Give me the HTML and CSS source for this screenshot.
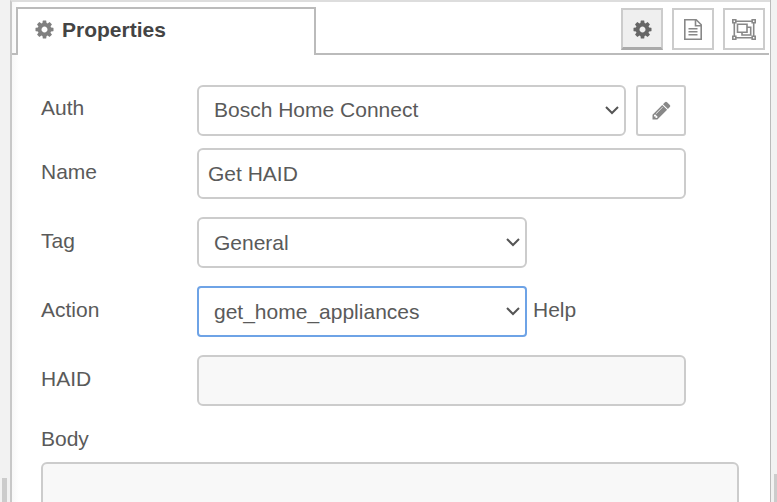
FILE: index.html
```html
<!DOCTYPE html>
<html lang="en">
<head>
<meta charset="utf-8">
<title>Properties</title>
<link rel="stylesheet" href="styles.css">
</head>
<body>
<svg class="defs" width="0" height="0">
  <symbol id="cog" viewBox="0 0 1792 1792"><path d="M1152 896q0-106-75-181t-181-75-181 75-75 181 75 181 181 75 181-75 75-181zm512-109v222q0 12-8 23t-20 13l-185 28q-19 54-39 91 35 50 107 138 10 12 10 25t-9 23q-27 37-99 108t-94 71q-12 0-26-9l-138-108q-44 23-91 38-16 136-29 186-7 28-36 28h-222q-14 0-24.500-8.500t-11.500-21.500l-28-184q-49-16-90-37l-141 107q-10 9-25 9-14 0-25-11-126-114-165-168-7-10-7-23 0-12 8-23 15-21 51-66.500t54-70.500q-27-50-41-99l-183-27q-13-2-21-12.500t-8-23.500v-222q0-12 8-23t19-13l186-28q14-46 39-92-40-57-107-138-10-12-10-24 0-10 9-23 26-36 98.500-107.500t94.500-71.500q13 0 26 10l138 107q44-23 91-38 16-136 29-186 7-28 36-28h222q14 0 24.500 8.500t11.500 21.500l28 184q49 16 90 37l142-107q9-9 24-9 13 0 25 10 129 119 165 170 7 8 7 22 0 12-8 23-15 21-51 66.500t-54 70.500q26 50 41 98l183 28q13 2 21 12.500t8 23.500z"/></symbol>
  <symbol id="chevron" viewBox="0 0 14 9"><path d="M1 1l6 6 6-6" fill="none" stroke="#555" stroke-width="2"/></symbol>
</svg>
<div class="tray">
  <div class="gutter gutter-left"><i class="grip"></i></div>
  <main class="panel">
    <header class="tabs">
      <div class="tab"><svg class="icon"><use href="#cog"/></svg><span>Properties</span></div>
      <div class="tools">
        <div class="tool active"><svg class="icon"><use href="#cog"/></svg></div>
        <div class="tool"><svg class="doc" viewBox="0 0 18 21" fill="none" stroke="#888" stroke-width="1.600"><path d="M.8.8h11.400l5 5v14.400H.8zM11.500.8v6h5.700M4.500 9.700h9M4.500 12.700h9M4.500 15.700h9"/></svg></div>
        <div class="tool"><svg class="group" viewBox="0 0 24 21" fill="none" stroke="#888" stroke-width="1.600"><path d="M4 2.300h16M4 18.700h16M2.300 4v13M21.700 4v13"/><path d="M.8.8h3v3h-3zM20.200.8h3v3h-3zM.8 17.200h3v3h-3zM20.200 17.200h3v3h-3zM5.500 5.300h9.500v8h-9.500zM15 8.300h3.700v7.700H10v-2.700"/></svg></div>
      </div>
    </header>
    <form class="form">
      <div class="row auth"><label>Auth</label><div class="field select wide"><span>Bosch Home Connect</span><svg class="arrow"><use href="#chevron"/></svg></div><div class="edit"><svg class="pencil" viewBox="0 0 1792 1792"><path d="M491 1536l91-91-235-235-91 91v107h128v128h107zm523-928q0-22-22-22-10 0-17 7l-542 542q-7 7-7 17 0 22 22 22 10 0 17-7l542-542q7-7 7-17zm-54-192l416 416-832 832h-416v-416zm683 96q0 53-37 90l-166 166-416-416 166-165q36-38 90-38 53 0 91 38l235 234q37 39 37 91z"/></svg></div></div>
      <div class="row"><label>Name</label><div class="field input"><span>Get HAID</span></div></div>
      <div class="row"><label>Tag</label><div class="field select"><span>General</span><svg class="arrow"><use href="#chevron"/></svg></div></div>
      <div class="row"><label>Action</label><div class="field select focused"><span>get_home_appliances</span><svg class="arrow"><use href="#chevron"/></svg></div><span class="help">Help</span></div>
      <div class="row"><label>HAID</label><div class="field input disabled"></div></div>
      <label class="body-label">Body</label>
      <div class="textarea"></div>
    </form>
  </main>
  <div class="gutter gutter-right"><i class="grip"></i></div>
</div>
</body>
</html>
```
FILE: styles.css
```css
* { box-sizing: border-box; }
body {
  margin: 0;
  overflow: hidden;
  background: #fff;
  color: #5a5a5a;
  font: 21px/30px "Liberation Sans", Arial, sans-serif;
}
svg { display: block; flex: none; }
.defs { position: absolute; }
.tray { display: flex; height: 502px; }
.gutter { display: flex; align-items: flex-end; background: #f2f2f2; }
.gutter-left { width: 10px; padding-left: 2px; }
.gutter-right { width: 7px; border-left: 1px solid #bbb; justify-content: flex-end; }
.grip { background: #ccc; }
.gutter-left .grip { width: 5px; height: 24px; }
.gutter-right .grip { width: 3px; height: 28px; }
.panel {
  width: 760px;
  height: 502px;
  overflow: hidden;
  border-left: 2px solid #c8c8c8;
  border-top: 2px solid #ddd;
  background: linear-gradient(90deg, #f8f8f8, #fff 7px);
}
.tabs {
  display: flex;
  justify-content: space-between;
  height: 53px;
  padding-top: 5px;
  margin-right: 1px;
  background: linear-gradient(#bbb, #bbb) 0 100% / 100% 2px no-repeat;
}
.tab {
  display: flex;
  align-items: flex-start;
  width: 300px;
  height: 48px;
  margin-left: 4px;
  padding: 6px 0 0 16px;
  border: 2px solid #bbb;
  border-bottom: 0;
  border-bottom-left-radius: 2px;
  background: #fff;
  color: #444;
  font-weight: bold;
}
.icon { width: 21px; height: 21px; fill: #666; }
.tab .icon { margin: 4px 7px 0 0; fill: #808080; }
.tools { display: flex; gap: 9px; padding: 1px 4px 0 0; }
.tool {
  display: flex;
  justify-content: center;
  width: 42px;
  height: 42px;
  padding-top: 9px;
  border: 2px solid #ccc;
  background: #fff;
}
.tool.active { background: #efefef; border-bottom: 3px solid #aaa; }
.doc { width: 18px; height: 21px; }
.group { width: 24px; height: 21px; }
.form { padding: 30px 0 0 29px; }
.row { display: flex; height: 51px; margin-bottom: 18px; }
.row label { width: 156px; padding-top: 9px; }
.row.auth { margin-bottom: 12px; }
.row.auth label { padding-top: 8px; }
.field {
  display: flex;
  align-items: center;
  justify-content: space-between;
  width: 489px;
  height: 51px;
  padding: 0 9px;
  border: 2px solid #ccc;
  border-radius: 6px;
  background: #fff;
}
.select { width: 330px; padding: 0 5px 0 15px; }
.select.wide { width: 429px; padding-bottom: 1px; }
.focused { border-color: #6ea3e6; border-radius: 4px; }
.disabled, .textarea { background: #f8f8f8; }
.arrow { width: 14px; height: 9px; }
.edit {
  display: flex;
  align-items: center;
  justify-content: center;
  width: 50px;
  height: 51px;
  margin-left: 10px;
  padding-bottom: 1px;
  border: 2px solid #ccc;
  border-radius: 3px;
}
.pencil { width: 21px; height: 21px; fill: #888; }
.help { padding: 9px 0 0 6px; }
.body-label { display: block; height: 38px; }
.textarea {
  width: 698px;
  height: 60px;
  border: 2px solid #ccc;
  border-radius: 6px;
}
```
